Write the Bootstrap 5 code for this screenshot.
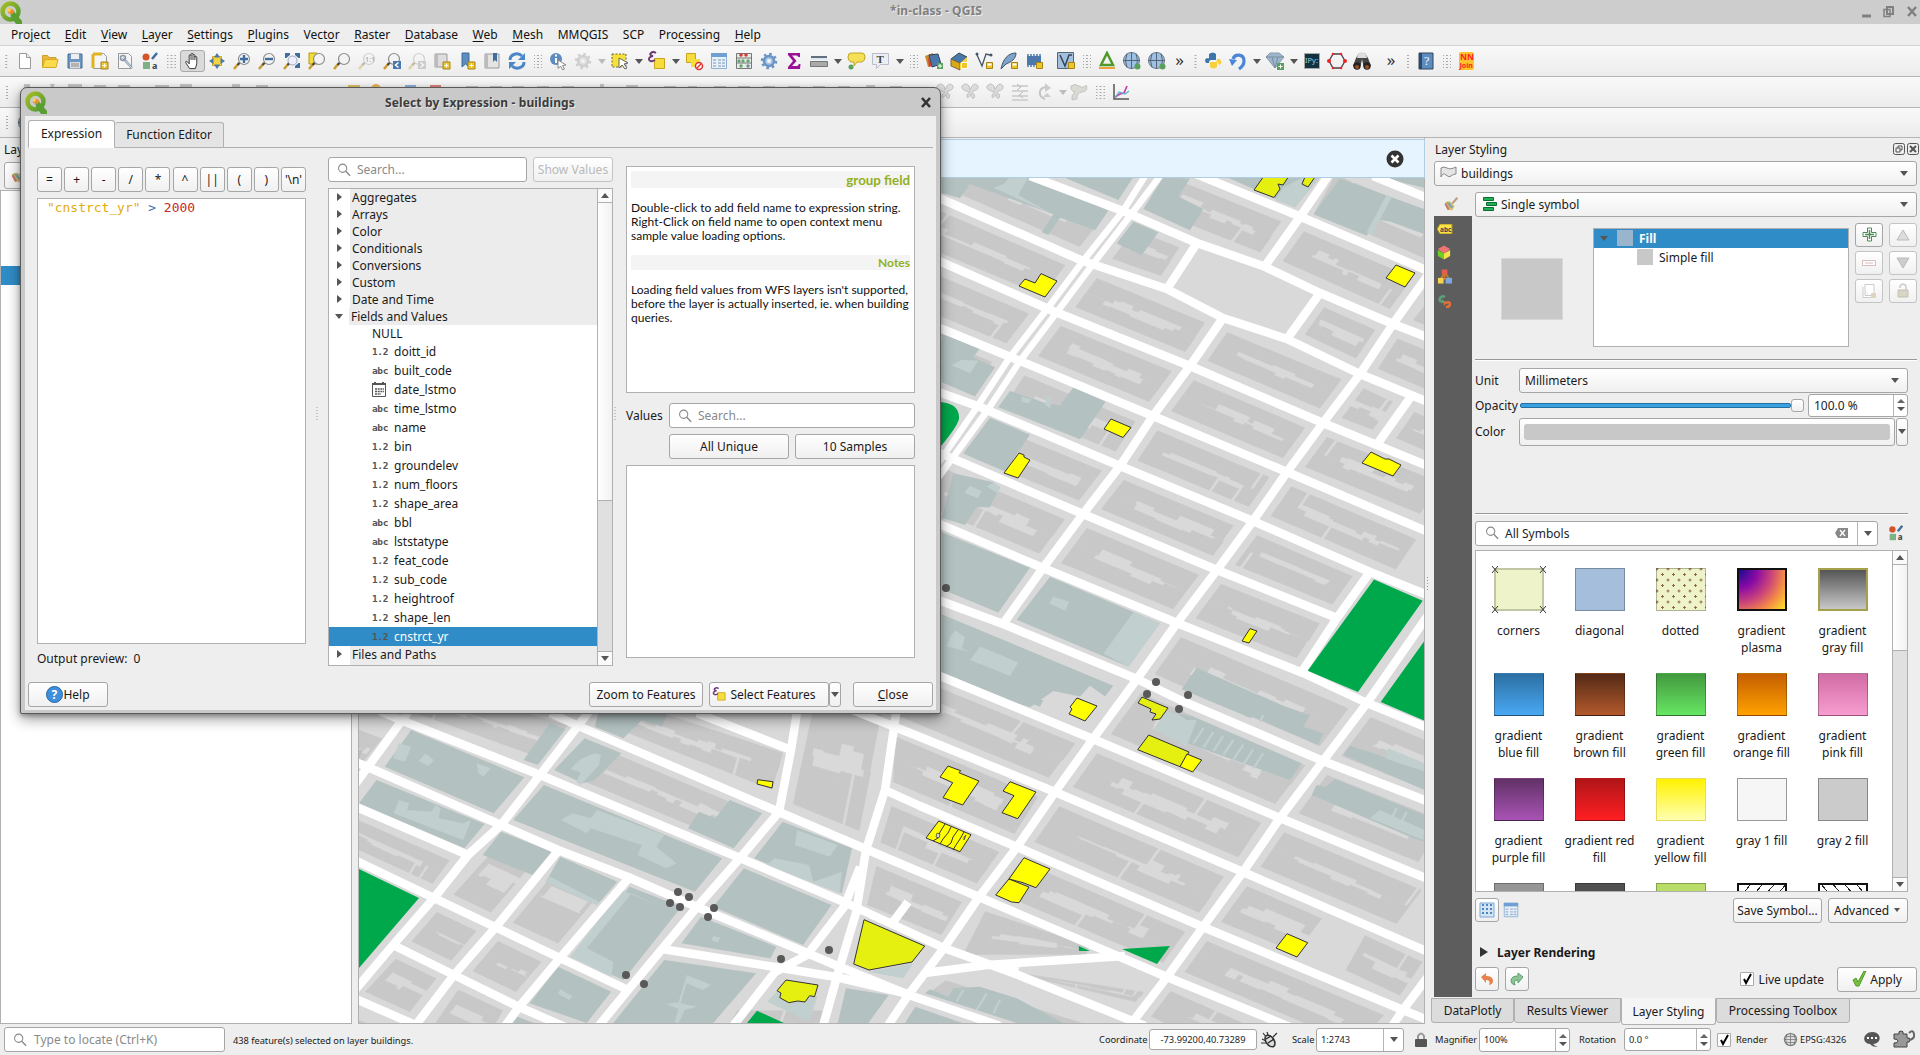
<!DOCTYPE html>
<html lang="en">
<head>
<meta charset="utf-8">
<title>*in-class - QGIS</title>
<link href="https://cdn.jsdelivr.net/npm/bootstrap@5.3.0/dist/css/bootstrap.min.css" rel="stylesheet">
<style>
body{width:1920px;height:1055px;overflow:hidden;background:#eee;font:12px/17px "Noto Sans",sans-serif;color:#1a1a1a;position:relative}
svg{display:block;flex:none}
.titlebar{height:24px;background:#cdcdcd;color:#808080;font-weight:700;text-shadow:1px 1px 0 #eee;letter-spacing:.1px}
.titlebar .ttl{flex:1;text-align:center;padding-right:12px;margin-top:-3px}
.menu{height:22px;gap:14.600px;padding-left:11px;border-bottom:1px solid #d2d2d2;color:#111}
.menu u{text-underline-offset:2px}
.tbar{height:31px;background:linear-gradient(#f9f9f9,#ececec);border-bottom:1px solid #b5b5b5}
.ic{width:20px;height:20px;margin:0 2.5px}
.on{margin:0;background:#dadada;border:1px solid #aaa;border-radius:3px;width:25px;height:22px;padding:0 2px}
.dd{width:12px;display:flex;justify-content:center}
.dd::before,.ar::before{content:"";border:4px solid transparent;border-top:5px solid #555;border-bottom:0}
.dim{opacity:.35}
.grip{height:17px;background:radial-gradient(circle,#aaa 0 .7px,transparent 1px) center/4px 3px;background-clip:content-box;padding:0 4px}
.split{width:3px;height:17px;background:radial-gradient(circle,#999 0 .7px,transparent 1px) center/3px 3px}
.ov{font-size:17px;line-height:14px;text-align:center;color:#333;padding-bottom:3px}
.main{height:886px}
.left{width:352px}
.well{background:#fff;border:1px solid #b0b0b0}
.mapcol{width:1067px;margin-left:6px;border:1px solid #b0b0b0;border-top:0}
.msgbar{height:39px;background:#e5f4fe;border:1px solid #b1cde2;margin:1px -1px 0;padding-right:20px}
.right{width:489px}
.qb{border:1px solid #a6a6a6;border-radius:3px;background:linear-gradient(#fff,#f0f0f0);padding:0;font:inherit;color:#1a1a1a;display:flex;align-items:center;justify-content:center;white-space:nowrap}
.qb.off{border-color:#c4c4c4;color:#b9b9b9}
.inp{border:1px solid #a6a6a6;border-radius:3px;background:#fff;display:flex;align-items:center;color:#8a8a8a;white-space:nowrap}
.ar{display:flex;align-items:center;justify-content:center}
.combo{justify-content:flex-start;padding:0 8px 0 5px}
.combo .ar{margin-left:auto}
.hl{height:2px;border-top:1px solid #999;background:#fff}
.side{width:38px;background:#5d5d5d}
.side .cur{height:24px;background:#eee;padding:4px 0 0 4px}
.side svg{margin-left:3px}
.sb{width:15px;border-left:1px solid #b0b0b0;background:#e0e0e0;display:flex;flex-direction:column}
.sb i{height:14px;background:#fafafa;display:flex;align-items:center;justify-content:center}
.sb i::before{content:"";border:4px solid transparent}
.sb .up{border-bottom:1px solid #b0b0b0}.sb .up::before{border-bottom:5px solid #555;border-top:0}
.sb .dn{border-top:1px solid #b0b0b0;margin-top:auto}.sb .dn::before{border-top:5px solid #555;border-bottom:0}
.sb b{background:linear-gradient(90deg,#fff,#f2f2f2);border-bottom:1px solid #b0b0b0}
.symgrid{display:grid;grid-template-columns:repeat(5,81px);grid-auto-rows:105px;padding:17px 0 0 2px;height:340px;overflow:hidden;width:416px;text-align:center}
.sw{width:50px;height:43px;margin:0 auto 11px;border:1px solid #0004}
.symgrid div div+span{display:block;padding:0 4px}
.spin{width:14px;border-left:1px solid #b5b5b5;display:flex;flex-direction:column;align-items:center;justify-content:center;gap:4px;height:100%;margin-left:auto}
.spin::before{content:"";border:4px solid transparent;border-bottom:4px solid #666;border-top:0}
.spin::after{content:"";border:4px solid transparent;border-top:4px solid #555;border-bottom:0}
.btab{height:25px;background:#dcdcdc;border:1px solid #b0b0b0;border-top-color:#b0b0b0;text-align:center;line-height:24px;border-radius:0 0 3px 3px}
.btab.cur{background:#f5f5f5;border-top-color:#f5f5f5;height:27px;line-height:26px}
.stat{height:31px;font-size:9.3px}
.chk{width:14px;height:14px;border:1px solid #aaa;background:#fff;border-radius:1px}
/* dialog window */
.dlg{position:absolute;left:20px;top:87px;width:921px;height:627px;border:1px solid #5a5a5a;border-radius:7px 7px 2px 2px;background:#c9c9c9;padding:0 4px 4px;box-shadow:0 5px 14px #0006,0 2px 4px #0004}
.dt{height:28px;color:#3c3c3c;font-weight:700;text-shadow:1px 1px 0 #e5e5e5;letter-spacing:.12px}
.dc{background:#eee;height:594px;padding:4px 3px 0}
.tabs{height:28px;border-bottom:1px solid #b0b0b0}
.tb{border:1px solid #b0b0b0;border-radius:3px 3px 0 0;text-align:center}
.ops .qb{width:25px;height:25px;font-size:12px}
.code{font:12.95px/18px "DejaVu Sans Mono",monospace;padding:0 9px}
.cat{height:17px;display:flex;line-height:17px}
.cat::before{content:"";width:0;height:0;margin:4px 8px 0 8px;border:4px solid transparent;border-left:5px solid #555;border-right:0}
.cat.open::before{margin:6px 6px 0 6px;border:4px solid transparent;border-top:5px solid #555;border-bottom:0}
.cat span{flex:1;background:#ececec;padding-left:2px}
.fld{height:19px;display:flex;align-items:center;padding-left:43px;line-height:18px}
.fld i{width:22px;font:700 9.5px/12px "DejaVu Sans Mono",monospace;color:#555;letter-spacing:-.4px}
.fld.sel{background:#308cc6;color:#fff}
.help{font:12px/14px Lato,sans-serif;color:#111;padding:4px 4px}
.strip{background:#f4f4f4;color:#93b023;text-align:right;font-weight:700}
</style>
</head>
<body>
<svg width="0" height="0" class="position-absolute">
<defs>
<linearGradient id="ring" x1="0" y1="0" x2="1" y2="1"><stop offset="0" stop-color="#a2bd22"/><stop offset="1" stop-color="#4f9a33"/></linearGradient>
<symbol id="q" viewBox="0 0 22 24"><circle cx="10.5" cy="11.5" r="8" fill="none" stroke="url(#ring)" stroke-width="4.5"/><path d="M10 11l4 .5 8 9.5v3h-6l-5-7z" fill="#5a9e32"/><path d="M8 8l6 2-1 4-5-1z" fill="#f08b2c"/><path d="M8 8l3 1-1 3-2-.5z" fill="#fbd54b"/></symbol>
<symbol id="new" viewBox="0 0 20 20"><path d="M4.500 2.500h7l4 4v11h-11z" fill="#fff" stroke="#999"/><path d="M11.500 2.500v4h4" fill="#eee" stroke="#999"/></symbol>
<symbol id="open" viewBox="0 0 20 20"><path d="M2.500 16V4.500h5l1.500 2h7V9" fill="#e8b93c" stroke="#c9a02c"/><path d="M2.500 16.500L5 8.500h13l-2 8z" fill="#fbdb4c" stroke="#d7a922"/></symbol>
<symbol id="save" viewBox="0 0 20 20"><path d="M3 3h14v14H3z" fill="#6d97c4" stroke="#486d94"/><path d="M6 3h8v5H6z" fill="#eee"/><path d="M5 11h10v6H5z" fill="#ddd"/><path d="M6 13h8M6 15h8" stroke="#888"/></symbol>
<symbol id="layout" viewBox="0 0 20 20"><path d="M3.500 2.500h10l3 3v12h-13z" fill="#f5f5f5" stroke="#999"/><path d="M3 3v14M3 3h9" stroke="#e0b320" stroke-width="3"/><path d="M11 11h7v7h-7z" fill="#edc52c" stroke="#a68312"/><path d="M14.500 12.500v4M12.500 14.500h4" stroke="#fff"/></symbol>
<symbol id="mgr" viewBox="0 0 20 20"><path d="M3.500 2.500h10l3 3v12h-13z" fill="#f5f5f5" stroke="#999"/><path d="M8 7l9 10" stroke="#89a" stroke-width="2.500"/><path d="M8 7l9 10" stroke="#dde" stroke-width="1"/><circle cx="8" cy="7" r="2.500" fill="none" stroke="#89a" stroke-width="1.500"/></symbol>
<symbol id="style" viewBox="0 0 20 20"><circle cx="6" cy="6" r="3.500" fill="#d4552b"/><path d="M12 8l5-6" stroke="#3f6d9e" stroke-width="2.500"/><path d="M3 11h7v7H3z" fill="#7fb186"/><text x="12" y="18" font-size="9" font-weight="700" fill="#444">a</text></symbol>
<symbol id="hand" viewBox="0 0 20 20"><path d="M7 18l-4-6c-.8-1.800.8-2.400 2-.9L6.500 13V4.500c0-1.500 2-1.500 2 0V3c0-1.500 2-1.500 2 0v1c0-1.500 2-1.300 2 .3V6c.2-1.300 2-1.200 2 .3V13l-1.500 5z" fill="#fff" stroke="#333"/><path d="M8.500 4.500V9M10.500 4v5M12.500 5v4" stroke="#333"/></symbol>
<symbol id="pansel" viewBox="0 0 20 20"><path d="M5.500 5.500h9v9h-9z" fill="#f4d43c" stroke="#c9a71c"/><path d="M10 2l3 4.500H7zM10 18l3-4.500H7zM2 10l4.500-3v6zM18 10l-4.500-3v6z" fill="#4a78ac"/></symbol>
<symbol id="mag" viewBox="0 0 20 20"><path d="M2 18l5-6" stroke="#c99b2e" stroke-width="2.500"/><path d="M5.500 14l2.500-2.500" stroke="#444" stroke-width="2"/><circle cx="12" cy="8" r="5.500" fill="#f3f3f3" stroke="#8d8d8d" stroke-width="1.200"/></symbol>
<symbol id="zin" viewBox="0 0 20 20"><use href="#mag"/><path d="M12 4v8M8 8h8" stroke="#3f6d9e" stroke-width="2.400"/></symbol>
<symbol id="zout" viewBox="0 0 20 20"><use href="#mag"/><path d="M8 8h8" stroke="#3f6d9e" stroke-width="2.400"/></symbol>
<symbol id="zfull" viewBox="0 0 20 20"><path d="M2 18l5-6" stroke="#c99b2e" stroke-width="2.500"/><path d="M5.500 14l2.500-2.500" stroke="#444" stroke-width="2"/><circle cx="10.500" cy="9.500" r="4.500" fill="#eef" stroke="#9ab"/><path d="M3 2h5v2L6 5.500 4.500 7H3zM18 2v5h-1.500L13 4V2zM18 17h-5v-2l3.500-3H18z" fill="#3f6d9e"/></symbol>
<symbol id="zsel" viewBox="0 0 20 20"><path d="M2 2h8v11H2z" fill="#f4dc3c" stroke="#b39a10"/><use href="#mag"/></symbol>
<symbol id="z11" viewBox="0 0 20 20"><use href="#mag"/><text x="8" y="11" font-size="7" font-weight="700" fill="#555">1:1</text></symbol>
<symbol id="zlast" viewBox="0 0 20 20"><use href="#mag"/><path d="M11 10h8v8h-8z" fill="#4a78ac"/><path d="M16.500 11.500l-3 2.500 3 2.500" stroke="#fff" stroke-width="1.500" fill="none"/></symbol>
<symbol id="znext" viewBox="0 0 20 20"><use href="#mag"/><path d="M11 10h8v8h-8z" fill="#888"/><path d="M13.500 11.500l3 2.500-3 2.500" stroke="#fff" stroke-width="1.500" fill="none"/></symbol>
<symbol id="book" viewBox="0 0 20 20"><path d="M3 3h12v13H3z" fill="#ddd" stroke="#999"/><path d="M3 3h3v13H3z" fill="#bbb"/><path d="M11 11h7v7h-7z" fill="#edc52c" stroke="#a68312"/><path d="M14.500 12.500v4M12.500 14.500h4" stroke="#fff"/></symbol>
<symbol id="bm" viewBox="0 0 20 20"><path d="M5 2h7v14l-3.500-3L5 16z" fill="#5d8cc0" stroke="#3f6d9e"/><path d="M11 11h7v7h-7z" fill="#edc52c" stroke="#a68312"/><path d="M14.500 12.500v4M12.500 14.500h4" stroke="#fff"/></symbol>
<symbol id="bmv" viewBox="0 0 20 20"><path d="M3 3h14v14H3z" fill="#e4e4e4" stroke="#999"/><path d="M3 3h3v14H3z" fill="#bbb"/><path d="M11 2h4v9l-2-2-2 2z" fill="#3f6d9e"/></symbol>
<symbol id="ref" viewBox="0 0 20 20"><path d="M3 9c0-6 8-8 12-4" fill="none" stroke="#4a86c8" stroke-width="3"/><path d="M18 2v7h-7zM2 18v-7h7z" fill="#4a86c8"/><path d="M17 11c0 6-8 8-12 4" fill="none" stroke="#4a86c8" stroke-width="3"/></symbol>
<symbol id="ident" viewBox="0 0 20 20"><circle cx="8" cy="8" r="6" fill="#5d8cc0"/><path d="M8 7v5M8 3.500v2" stroke="#fff" stroke-width="2"/><path d="M10 9l8 5-3.500.5 2 3.500-1.800.8-2-3.500-2.700 2z" fill="#fff" stroke="#888"/></symbol>
<symbol id="gear" viewBox="0 0 20 20"><circle cx="10" cy="10" r="5" fill="#a8c4e4" stroke="#6a94c4" stroke-width="2.500"/><circle cx="10" cy="10" r="7" fill="none" stroke="#6a94c4" stroke-width="2.500" stroke-dasharray="2.500 3"/><circle cx="10" cy="10" r="2" fill="#f4f4f4"/></symbol>
<symbol id="sel" viewBox="0 0 20 20"><path d="M2 3h14v13H2z" fill="#f6e13c" stroke="#665" stroke-dasharray="2 1.500"/><path d="M9 7l9 5-4 1 3 4-2 1-3-4-3 3z" fill="#fff" stroke="#666"/></symbol>
<symbol id="eps" viewBox="0 0 20 20"><path d="M7.500 7.500h10v10h-10z" fill="#f6dc3c" stroke="#c7a41c"/><path d="M9 2C5-.5 0 4 6 5-1 6 2 13 8 9" fill="none" stroke="#6b3a76" stroke-width="1.900"/></symbol>
<symbol id="desel" viewBox="0 0 20 20"><path d="M2.500 2.500h9v9h-9z" fill="#f6dc3c" stroke="#c7a41c"/><path d="M7 8h9v8H7z" fill="#f6dc3c"/><circle cx="15" cy="15" r="3.500" fill="#fff" stroke="#d33" stroke-width="1.500"/><path d="M13 17l4-4" stroke="#d33" stroke-width="1.500"/></symbol>
<symbol id="tbl" viewBox="0 0 20 20"><path d="M2.500 2.500h15v15h-15z" fill="#e8f0f8" stroke="#8fb0d0"/><path d="M2 2h16v4H2z" fill="#6fa0d4"/><path d="M4 9h3M9 9h3M13 9h3M4 12h3M9 12h3M13 12h3M4 15h3M9 15h3M13 15h3" stroke="#9ab4d0" stroke-width="1.500"/></symbol>
<symbol id="aba" viewBox="0 0 20 20"><path d="M2.500 2.500h15v15h-15zM2 7h16M2 12h16" fill="#e5efe8" stroke="#777"/><circle cx="7" cy="4" r="1.800" fill="#d43c3c"/><circle cx="12" cy="4" r="1.800" fill="#d43c3c"/><circle cx="5" cy="10" r="1.700" fill="#6aa277"/><circle cx="9" cy="10" r="1.700" fill="#6aa277"/><circle cx="14" cy="10" r="1.700" fill="#6aa277"/><circle cx="7" cy="15" r="1.700" fill="#6aa277"/><circle cx="14" cy="15" r="1.700" fill="#789"/></symbol>
<symbol id="sum" viewBox="0 0 20 20"><path d="M4 2h12v4h-1.500L13 4.500H8l4.500 5.500L8 15h5.500l1.500-2h1.500l-.5 5H4v-2l5-6-5-6z" fill="#9a1295"/></symbol>
<symbol id="ruler" viewBox="0 0 20 20"><path d="M2 6h16" stroke="#345" stroke-width="1.500"/><path d="M1.500 10.500h17v5h-17z" fill="#aaa" stroke="#777"/><path d="M2 7h16v2H2z" fill="#ddeaf5"/></symbol>
<symbol id="tip" viewBox="0 0 20 20"><path d="M5 2h11q3 0 3 4t-3 5h-5l-3 4v-4H5q-3-1-3-5t3-4z" fill="#f5e055" stroke="#bfa52a"/><circle cx="5" cy="16" r="2.500" fill="#58a05b"/></symbol>
<symbol id="txt" viewBox="0 0 20 20"><path d="M1.500 2.500h16v11h-8l-4 4v-4h-4z" fill="#e9eff4" stroke="#bbc"/><text x="5.500" y="12" font-size="11" font-family="Liberation Serif" font-weight="700" fill="#444">T</text></symbol>
<symbol id="lay" viewBox="0 0 20 20"><path d="M1 5l8-3 3 10-8 4z" fill="#c98a2b"/><path d="M5 4l9-1 3 10-9 3z" fill="#4a78ac" stroke="#345"/><path d="M4 6l4 9-3 1z" fill="#d33"/><path d="M13 12h6v6h-6z" fill="#58a05b"/><path d="M16 13v4M14 15h4" stroke="#fff"/></symbol>
<symbol id="box" viewBox="0 0 20 20"><path d="M2 8l8-6 8 4-7 6z" fill="#4a78ac" stroke="#345"/><path d="M2 8l9 4v7l-9-4z" fill="#d9a918" stroke="#765"/><path d="M11 12l7-6v7l-7 6z" fill="#f3d252"/><path d="M12.500 11.500h6v6h-6z" fill="#edc52c" stroke="#fff"/></symbol>
<symbol id="vec" viewBox="0 0 20 20"><path d="M3 4l5 11 4-12 4 1" fill="none" stroke="#456" stroke-width="1.300"/><circle cx="3" cy="3" r="1.500" fill="#456"/><circle cx="17" cy="4" r="1.500" fill="#456"/><path d="M12.500 11.500h6v6h-6z" fill="#edc52c" stroke="#a68312"/><path d="M13.500 12.500h4v2h-4z" fill="#fff"/></symbol>
<symbol id="fea" viewBox="0 0 20 20"><path d="M2 18C4 8 9 2 17 2c0 6-5 9-10 11z" fill="#7ea4ce" stroke="#456"/><path d="M12.500 11.500h6v6h-6z" fill="#edc52c" stroke="#a68312"/><path d="M13.500 12.500h4v2h-4z" fill="#fff"/></symbol>
<symbol id="chip" viewBox="0 0 20 20"><path d="M3 5h14v9H3z" fill="#4a78ac"/><path d="M4 3v13M7 3v13M10 3v13M13 3v13M16 3v13" stroke="#4a78ac" stroke-width="1.500"/><path d="M12.500 11.500h6v6h-6z" fill="#edc52c" stroke="#a68312"/></symbol>
<symbol id="vgrid" viewBox="0 0 20 20"><path d="M1.500 1.500h16v16h-16z" fill="#a3c0de" stroke="#567"/><path d="M4 4l5 11 4-11h3" fill="none" stroke="#345" stroke-width="1.500"/><path d="M12.500 11.500h6v6h-6z" fill="#edc52c" stroke="#a68312"/></symbol>
<symbol id="tri" viewBox="0 0 20 20"><path d="M10 2l6 12H4z" fill="none" stroke="#4f9a2a" stroke-width="2.500"/><path d="M2 16h16v2H2z" fill="#e8a33c"/></symbol>
<symbol id="globe" viewBox="0 0 20 20"><circle cx="9.500" cy="9.500" r="8" fill="#9dc0e4" stroke="#678"/><path d="M9.500 1v17M1 9.500h17M5 2.500q-3 7 0 14M14 2.500q3 7 0 14" fill="none" stroke="#567"/><circle cx="15.500" cy="15.500" r="3" fill="#58a05b"/></symbol>
<symbol id="py" viewBox="0 0 20 20"><path d="M6 9V3q4-3 7 0v6H8q-2 0-2 3H3q-3-5 3-5z" fill="#3c76aa"/><path d="M14 10v6q-4 3-7 0v-5h5q2 0 2-3h3q3 5-1 6z" fill="#f7d13d"/></symbol>
<symbol id="undo" viewBox="0 0 20 20"><path d="M5 8c2-6 11-5 11 2 0 4-2 6-5 8" fill="none" stroke="#4a86d8" stroke-width="3.200"/><path d="M1 8l8 1-5 6z" fill="#4a86d8"/></symbol>
<symbol id="dia" viewBox="0 0 20 20"><path d="M1 6l4-4h9l5 4-9 11z" fill="#9db6cc" stroke="#8a9cb0"/><path d="M1 6h18M7 6l3 11 3-11" stroke="#7a8ca0" fill="none"/><path d="M12 12h7v7h-7z" fill="#58a05b"/><path d="M15.500 13.500v4M13.500 15.500h4" stroke="#fff"/></symbol>
<symbol id="ipy" viewBox="0 0 20 20"><path d="M2.500 2.500h15v15h-15z" fill="#123240" stroke="#aaa"/><text x="3" y="12" font-size="7.500" fill="#9cd">IPy:</text></symbol>
<symbol id="hex" viewBox="0 0 20 20"><path d="M6 3h8l4 7-4 7H6l-4-7z" fill="none" stroke="#445" stroke-width="1.300"/><g fill="#e22"><circle cx="6" cy="3" r="1.300"/><circle cx="14" cy="3" r="1.300"/><circle cx="18" cy="10" r="2"/><circle cx="14" cy="17" r="1.300"/><circle cx="6" cy="17" r="1.300"/><circle cx="2" cy="10" r="2"/></g></symbol>
<symbol id="bino" viewBox="0 0 20 20"><path d="M4 7l3-5h6l3 5 3 8H1z" fill="#444"/><path d="M6 3q4-4 8 0l1 4H5z" fill="#ddd"/><path d="M10 8l2 10H8z" fill="#eee"/><circle cx="5" cy="15" r="3.700" fill="#222"/><circle cx="15" cy="15" r="3.700" fill="#222"/><circle cx="5" cy="16" r="2" fill="#9a5222"/><circle cx="15" cy="16" r="2" fill="#9a5222"/></symbol>
<symbol id="hbook" viewBox="0 0 20 20"><path d="M3 2h14v16H3z" fill="#5d8cc0" stroke="#345"/><path d="M3 2h3v16H3z" fill="#2c4a6c"/><text x="8" y="14" font-size="12" fill="#fff" font-family="Liberation Serif">?</text></symbol>
<symbol id="nn" viewBox="0 0 20 20"><rect x="2" y="1" width="15" height="18" rx="2" fill="#ffc22b"/><text x="3" y="9" font-size="8.500" font-weight="700" fill="#f22">NN</text><text x="2.500" y="16.500" font-size="7" font-weight="700" fill="#f22">Join</text></symbol>
<symbol id="sci" viewBox="0 0 20 20"><path d="M2 4q4-4 7 0l1 4 2-4q3-4 6 0 1 4-5 5l-1 2q4 1 2 5-3 1-3-4-3 5-4 3-1-3 3-5Q0 8 2 4z" fill="#d3d3d3" stroke="#aaa"/></symbol>
<symbol id="plot" viewBox="0 0 20 20"><path d="M3 2v15h15" fill="none" stroke="#555" stroke-width="1.500"/><path d="M4 15l5-3 4-1 3-7" fill="none" stroke="#c23fae" stroke-width="1.700"/><path d="M4 16l4-6 6 2 4-3" fill="none" stroke="#58b5c8" stroke-width="1.300"/></symbol>
<symbol id="loupe" viewBox="0 0 16 16"><circle cx="6.500" cy="6" r="4.700" fill="none" stroke="#888" stroke-width="1.200"/><path d="M10 9.500l5 5" stroke="#888" stroke-width="1.600"/></symbol>
<symbol id="brush" viewBox="0 0 20 20"><path d="M18 2l-6 7" stroke="#b7a07a" stroke-width="2.500"/><path d="M3 8l6-2 6 6-3 5-6-1z" fill="#d9c46c"/><path d="M4 9l4 7" stroke="#c87a74" stroke-width="2.500"/><path d="M8 8l4 6" stroke="#7a9fc4" stroke-width="2.500"/><path d="M6 7l4 6" stroke="#7ab07c" stroke-width="1.500"/></symbol>
</defs>
</svg>

<div class="d-flex flex-column">
<div class="titlebar d-flex align-items-center"><svg width="22" height="24"><use href="#q"/></svg><span class="ttl">*in-class - QGIS</span>
<svg width="58" height="14" viewBox="0 0 58 14" fill="none" stroke="#808080"><path d="M0 11h9" stroke-width="3"/><path d="M22 4.500h6v7h-6z" stroke-width="1.500"/><path d="M25 2h6v7h-6z" stroke-width="2"/><path d="M46 2l8 9M54 2l-8 9" stroke-width="2.500"/></svg></div>
<nav class="menu d-flex align-items-center"><span>Pro<u>j</u>ect</span><span><u>E</u>dit</span><span><u>V</u>iew</span><span><u>L</u>ayer</span><span><u>S</u>ettings</span><span><u>P</u>lugins</span><span>Vect<u>o</u>r</span><span><u>R</u>aster</span><span><u>D</u>atabase</span><span><u>W</u>eb</span><span><u>M</u>esh</span><span>MMQGIS</span><span>SCP</span><span>Pro<u>c</u>essing</span><span><u>H</u>elp</span></nav>
<div class="tbar d-flex align-items-center">
<span class="grip" style="width:12.5px"></span><svg class="ic"><use href="#new"/></svg><svg class="ic"><use href="#open"/></svg><svg class="ic"><use href="#save"/></svg><svg class="ic"><use href="#layout"/></svg><svg class="ic"><use href="#mgr"/></svg><svg class="ic"><use href="#style"/></svg><span class="grip" style="width:17px"></span><svg class="ic on"><use href="#hand"/></svg><svg class="ic"><use href="#pansel"/></svg><svg class="ic"><use href="#zin"/></svg><svg class="ic"><use href="#zout"/></svg><svg class="ic"><use href="#zfull"/></svg><svg class="ic"><use href="#zsel"/></svg><svg class="ic"><use href="#mag"/></svg><svg class="ic dim"><use href="#z11"/></svg><svg class="ic"><use href="#zlast"/></svg><svg class="ic dim"><use href="#znext"/></svg><svg class="ic"><use href="#book"/></svg><svg class="ic"><use href="#bm"/></svg><svg class="ic"><use href="#bmv"/></svg><svg class="ic"><use href="#ref"/></svg><span class="grip" style="width:16px"></span><svg class="ic"><use href="#ident"/></svg><svg class="ic dim" style="filter:grayscale(1)"><use href="#gear"/></svg><span class="dd dim"></span><svg class="ic"><use href="#sel"/></svg><span class="dd"></span><svg class="ic"><use href="#eps"/></svg><span class="dd"></span><svg class="ic"><use href="#desel"/></svg><svg class="ic"><use href="#tbl"/></svg><svg class="ic"><use href="#aba"/></svg><svg class="ic"><use href="#gear"/></svg><svg class="ic"><use href="#sum"/></svg><svg class="ic"><use href="#ruler"/></svg><span class="dd"></span><svg class="ic"><use href="#tip"/></svg><svg class="ic"><use href="#txt"/></svg><span class="dd"></span><span class="grip" style="width:16px"></span><svg class="ic"><use href="#lay"/></svg><svg class="ic"><use href="#box"/></svg><svg class="ic"><use href="#vec"/></svg><svg class="ic"><use href="#fea"/></svg><svg class="ic"><use href="#chip"/></svg><span style="width:7px"></span><svg class="ic"><use href="#vgrid"/></svg><span class="grip" style="width:16px"></span><svg class="ic"><use href="#tri"/></svg><svg class="ic"><use href="#globe"/></svg><svg class="ic"><use href="#globe"/></svg><span class="ov" style="width:20px">»</span><span class="grip" style="width:11px"></span><svg class="ic"><use href="#py"/></svg><svg class="ic"><use href="#undo"/></svg><span class="dd"></span><svg class="ic"><use href="#dia"/></svg><span class="dd"></span><svg class="ic"><use href="#ipy"/></svg><svg class="ic"><use href="#hex"/></svg><svg class="ic"><use href="#bino"/></svg><span class="ov" style="width:27px;padding-left:6px">»</span><span class="grip" style="width:12px"></span><svg class="ic"><use href="#hbook"/></svg><span class="grip" style="width:16px"></span><svg class="ic"><use href="#nn"/></svg>
</div>
<div class="tbar d-flex align-items-center"><span class="grip" style="width:14px"></span>
<svg width="918" height="20" viewBox="14 0 918 20" fill="#b9b9b9" opacity=".8"><path d="M24 2l6 0 1 16h-8zM50 2l5 0-3 6zM68 2h14v15H68zM94 3h12v9H94zM118 3h12v9h-12zM155 3h14v9h-14zM180 2h12v9h-12zM232 2h8v12h-8zM256 3h12v9h-12z"/><path d="M348 3h12v8h-12z" fill="#d8b53c"/><circle cx="376" cy="7" r="5" fill="#e8a52c"/><path d="M405 3h11v8h-11z" fill="#6f9fd8"/><path d="M430 3h11v8h-11z" fill="#e0605a"/><path d="M466 4h12v7h-12zM490 4h12v7h-12zM512 4h12v7h-12zM537 4h12v7h-12zM562 4h12v7h-12zM600 2h4v9h-4zM626 3h12v9h-12zM664 4h12v9h-12zM688 4h9v9h-9zM714 4h12v9h-12zM738 4h12v9h-12zM763 4h12v9h-12zM788 4h12v9h-12zM813 4h12v9h-12zM838 4h12v9h-12zM866 3h9v9h-9zM890 4h12v9h-12z"/></svg>
<svg class="ic dim" style="opacity:.7"><use href="#sci"/></svg><svg class="ic" style="opacity:.7"><use href="#sci"/></svg><svg class="ic" style="opacity:.7"><use href="#sci"/></svg><svg class="ic" viewBox="0 0 20 20"><path d="M2 4h16M2 9h16M2 14h16M2 18h16" stroke="#d3d3d3" stroke-width="2"/><path d="M7 2l4 3-4 3M13 10l-4 3 4 3" stroke="#bbb" fill="none"/></svg><svg class="ic" viewBox="0 0 20 20"><path d="M10 17c-7-2-7-11 1-12" fill="none" stroke="#c4c4c4" stroke-width="2"/><path d="M10 1l6 5-6 4zM8 15h8l-4-4z" fill="#ccc"/></svg><span class="dd dim"></span><svg class="ic" style="margin-left:0" viewBox="0 0 20 20"><path d="M2 4q4-3 8 0t7-1q3 6-4 7-6 1-5 7l-5 1q-1-5 3-8-5-1-4-6z" fill="#d9dbd3" stroke="#c4c4c4"/></svg><span class="grip" style="width:17px"></span><svg class="ic"><use href="#plot"/></svg></div>
<div class="tbar d-flex align-items-center" style="height:30px"><span class="grip" style="width:14px"></span><svg class="ic"><use href="#globe"/></svg></div>

<div class="main d-flex">
<div class="left d-flex flex-column"><div style="height:24px;padding:3px 4px">Layers</div>
<div class="d-flex" style="height:28px;padding:0 4px 2px"><div class="qb on" style="width:28px;height:27px"><svg width="18" height="18"><use href="#brush"/></svg></div></div>
<div class="well flex-fill" style="padding-top:75px"><div style="height:19px;background:#308cc6"></div></div></div>
<div class="mapcol d-flex flex-column"><div class="msgbar d-flex align-items-center justify-content-end"><svg width="18" height="18" viewBox="0 0 18 18"><circle cx="9" cy="9" r="8.500" fill="#333"/><path d="M5.500 5.500l7 7M12.500 5.500l-7 7" stroke="#fff" stroke-width="2.600"/></svg></div>
<svg id="map" width="1065" height="845" viewBox="359 178 1065 845" style="background:#d9d9d9">
<path id="lots" fill="#c8c8c8" stroke="#cbcbcb" stroke-width=".4"/>
<g fill="#b3c2c1">
<g transform="translate(350 700) scale(.40816 .33333)">
<path d="M150 90L427 232 352 340 85 200zM65 240L330 372 280 445 22 310zM475 255L912 475 845 575 400 360zM370 395L495 455 447 525 325 465zM515 470L655 545 605 615 480 545zM685 560L812 620 670 840 540 770zM965 505L1180 615 1110 735 890 620zM1060 365L1230 445 1205 580 990 475zM930 300L1010 340 940 445 828 385 855 335 895 355zM860 650L1045 740 1030 775 812 730zM770 780L995 820 890 969 645 969zM510 800L640 875 580 969 440 910zM1215 865L1320 885 1270 969 1195 969zM575 115L665 160 600 240 570 250 500 210zM490 70L528 88 460 195 425 180zM610 30L780 30 765 80 715 60 670 115 600 80zM1385 920L1500 969 1360 969zM400 945L450 969H395zM22 150l10 0-10 25z"/>
<path fill="#c1cfce" d="M605 330L770 405 750 440 800 490 775 505 705 465 715 435 590 385 580 400 517 360 545 340 590 355zM120 130l30 10-15 45-30-10zM185 160l20 20-12 18-25-15zM310 190l35 15-18 25-12-10zM120 300l25 10-5 20 60 5 10-20 12 10-5 30 60 15 20-10-20 60-170-80zM600 160l15 5-5 30-45 60-10-8 10-30-25-10 25-30zM540 770L665 570 750 615 690 580 580 745 645 785 640 830zM1095 390l100 45-20 35-85-35zM1040 475l85 20 10 50 70-30-5 65-180-85zM1270 815L1380 790 1355 835zM1050 870L1145 890 1125 965 1022 905zM480 545l10-15 120 75-5 10zM890 708l18 6-8 14-15-8zM515 868l30 20-8 12-27-18zM825 825l60 30-20 15-40-20-15 60 40 10-30 10-15 40-10-3 10-40-30-15 30-5z"/>
</g>
<g transform="translate(920 700) scale(.33333)">
<path d="M820 50L1145 190 1110 240 800 130 740 30zM870 0L1040 0 1170 45 1150 80 1210 100 1195 135 900 10zM1245 237L1513 345 1513 425 1480 415 1175 285 1190 255 1215 262zM1290 137L1513 210 1513 270 1270 165zM15 880L30 868 85 890 100 865 180 860 290 895 430 969 290 969zM0 928L100 969H0zM310 0h60l-10 20z"/>
<path fill="#c1cfce" d="M700 90L740 30 770 40 800 60 830 60 800 140zM1405 145l110 45v25l-120-40zM1380 330l133 60-3 30-160-65z"/>
<path fill="none" stroke="#c1cfce" stroke-width="7" d="M850 85l-30 45M880 97l-30 45M910 108l-30 45M940 120l-30 45M970 134l-30 45M1000 148l-30 45M1030 160l-30 45M1000 10l-20 40M1040 25l-20 40M1430 325l-20 40M1460 335l-20 40M130 870l-20 35M200 880l-30 50M240 900l-20 40"/>
</g>
<g transform="translate(930 150) scale(.33333 .35714)">
<path d="M35 76L330 76 535 170 495 225 390 190 355 238 335 230 370 180 120 95 90 135 35 120zM400 76L610 76 565 140zM700 76L780 80 745 130 820 165 780 225 640 165zM610 200L685 230 635 295 560 262zM890 76L1170 76 1095 160zM1230 80L1482 165 1482 235 1380 200 1340 195 1310 240 1150 180zM35 515L150 555 130 580 195 608 135 690 35 650zM240 675L350 710 390 715 430 665 527 705 450 810 205 720zM180 750L300 797 225 900 100 850zM70 905L190 930 210 945 180 1000 140 1000 105 1050 35 1030zM35 1070L300 1170 205 1295 35 1230zM360 1195L690 1325 595 1447 260 1315zM35 1300L550 1500 525 1530 480 1500 450 1530 370 1515 300 1560 200 1530 35 1465zM800 1450L1080 1565 960 1590 755 1510zM1350 76h132v30z"/>
<path fill="#c1cfce" d="M610 1295L690 1325 595 1447 520 1410zM150 1390l115 45-25 38-120-45zM370 1250l48 15-12 25-48-20zM75 1345l30 20-10 30 25 10-70-15 10-25zM120 940l35 15-12 20-40-15zM95 587l50 3-25 35-55-22zM240 76h55l-30 50 105 55-180-75 30-10zM1060 105l60-29 50 0-75 84-60-20zM1370 125l15 8-60 105-15-8zM275 690l30 8-10 12-20-5zM350 690l15 3-5 30-15-10zM190 932l20 10-5 20-35-20z"/>
</g>
</g>
<g fill="none" stroke="#fff" stroke-width="8.500" stroke-linejoin="round">
<path d="M1373 176L1440 203M1196 174L1300 216.500 1440 276M1030 176L1123 211 1197 243 1263 266 1320 293 1393 324 1440 342M930 194L1083 261 1167 289 1223 318 1287 339 1360 374 1440 407M930 257L1053 311 1190 366 1323 423 1440 471M930 324L1013 358 1153 416 1287 472 1440 537M930 389L980 407 1120 466 1253 521 1370 572 1440 600M930 449L1083 514 1217 570 1337 618M930 520L1043 568 1177 623 1303 673 1367 703 1440 733M930 597L1003 624 1137 679 1180 700 1323 761 1440 806M930 672L1093 739 1280 818 1440 884M850 709L920 737 1055 792 1243 872 1440 957M697 713L791 750M884.700 790L920 806 1017 847 1203 927 1403 1010 1440 1025M550 713L583 728 779 812 868 850 979 897 1167 977 1290 1027M380 711L403 721 540 775 740 858 844 902 944 948 1013 973 1145 1026M340 755L501 825 558 850 628 877 697 907 807 953 840 967 909 995 1000 1026M340 800L468 855M340 853L434 898 495 927 560 958 628 990M393 945L454 975 519 1007 565 1027M340 992L420 1027"/>
<path d="M411 708L340 805M598 700L540 775 501 825 468 855 434 898 393 945 345 1002M558 851L495 928 454 975 412 1030M628 879L560 958 519 1007 500 1033M799 700L791 750 779 812 740 858 697 907 628 990 597 1028M898 700L885 790 866 850 856 913 838 973 822 1030M860 867L844 907 807 955 775 972 730 1030M662 949L775 967 836 977 909 994M1433 268L1393 324 1360 374 1323 423 1287 472 1253 521 1217 570 1177 623 1137 679 1093 739 1055 792 1017 847 979 897 944 948 909 994 885 1030M1440 598L1367 703 1323 761 1280 818 1243 872 1203 927 1167 977 1128 1028M1435 967L1403 1010 1388 1032M925 973L987 965 1125 956M1012 973L1017 963M893 922L908 902M1328 176L1300 217 1265 266M1197 243L1167 289M1223 318L1190 366 1153 416 1120 466 1083 514 1043 568 1003 624M1320 293L1287 339M1410 398L1378 443M1370 572L1337 618 1301 673"/>
<path stroke-width="6.500" d="M1145 176L1123 211 1083 261 1047 309 1010 357 977 407 935 468M1160 176L1130 216 1093 264 1057 312 1020 361 987 411 935 482"/>
</g>
<path fill="#00a84c" d="M1374 579.600L1422.700 600.700 1358 692 1307.700 670.700zM1425 640L1380.700 702 1425 721zM930 400L941 402Q960 404 959 419 957 427 941 446L930 450zM359 869L419 898 359 968zM757 1010.700L784 1023H747zM1078.700 946L1090 951H1079zM1122 949L1170 946 1157 964z"/>
<g stroke="#333" stroke-width="1">
<path fill="#e5f011" d="M1254 190L1264 176H1289L1283 185 1278 184 1280 189 1274 197.500zM1305 177H1315L1308 187 1302 184zM1142 697L1168 708 1160 719 1152 720 1156 714 1150 712 1151 709 1138 703zM1148.700 735L1189 752 1180 766.700 1137.700 749.700zM864 919.700L924.700 946 912 962 869 970 853.700 964zM786 980L818 985 814.500 996.700 809.600 995.700 805 1002 797.800 1001 788.800 1002.700 779.800 997.700 781 993 777 990.700z"/>
<path fill="#ff0" d="M1396 265L1415 273 1405 287 1386 278zM1019 286L1025 279 1035 283 1041 273.600 1057 281 1045 297zM1111 419L1131 427.500 1123 437.500 1104 429zM1019 453L1024 455 1024 457 1030 460 1018 478 1004 473zM1371 452L1385 459 1389 459 1401 465 1393 476 1362 463zM1250 628.600L1257 631 1249 643 1242 641zM1077 698L1097 706 1085 721 1069 714 1072 709 1070 707zM1187 754L1201.700 760 1192.700 772 1180 766.700zM948 766L960.700 770.700 959 772.700 979 781 962.700 805 943 797.700 952.700 782.700 940 777zM1010 781.700L1036 792 1017.700 818.700 1002 812.700 1014 795.700 1003 791zM938.700 821L971 834.700 960 851.700 926 838zM1024 857.700L1050 869 1036 887.700 1023 882.700 1009 879zM1009 879L1029 887 1019 902.700 1011.700 902 995.700 895zM1287 933.700L1307.700 942.700 1297 957 1276 948zM757.800 779.700L773 781.700 772 788 757 784z"/>
<path fill="none" d="M945 824L940 832 938 838 933 841M951 827L948 833 943 839 940 844M958 830L953 837 951 843 946 847M964 832L960 839 956 845 953 850"/><path fill="#d9d9d9" stroke-width=".7" d="M937 833l3 1-1 4-3-1zM964 837l2-2-2 5z"/>
</g>
<g fill="#595959" id="dots"></g>
</svg></div>

<span class="split" style="margin:437px 2px 0 1px"></span>
<div class="right d-flex flex-column">
<div class="d-flex align-items-center" style="height:23px;padding-left:4px"><span>Layer Styling</span><svg class="ms-auto" width="30" height="13" viewBox="0 0 30 13" fill="none" stroke="#555"><rect x="3.500" y=".5" width="11" height="11" rx="2"/><path d="M6 5h4v4H6zM8 5V3h4v4h-2"/><rect x="17.500" y=".5" width="11" height="11" rx="2"/><path d="M20 3l6 6M26 3l-6 6" stroke-width="2"/></svg></div>
<button class="btn qb combo" style="width:483px;height:25px;margin-left:3px"><svg width="17" height="14" viewBox="0 0 17 14" class="me-1"><path d="M1 2q3-2 6 0t9-1v7q-3 0-5 2t-5-1-5 2z" fill="#e5e5e5" stroke="#888"/></svg>buildings<span class="ar"></span></button>
<div class="d-flex" style="height:806px;margin:6px 3px 0">
<div class="side"><div class="cur"><svg width="19" height="17"><use href="#brush"/></svg></div>
<svg style="margin-top:8px" width="16" height="10" viewBox="0 0 16 10"><path d="M3 0h12v10H3L0 5z" fill="#f7e24a" stroke="#a98d16"/><text x="3" y="8" font-size="6.500" font-weight="700" fill="#444">abc</text></svg>
<svg style="margin-top:11px" width="14" height="15" viewBox="0 0 16 16"><path d="M8 0l7 4-7 5-7-5z" fill="#f07474"/><path d="M1 5l7 4v7l-7-4z" fill="#6ad021"/><path d="M15 5L8 9v7l7-4z" fill="#f7e24a"/></svg>
<svg style="margin-top:8px" width="16" height="17" viewBox="0 0 17 17"><path d="M8 4L4 11M8 4l5 7M8 4v8" stroke="#c9792b" stroke-width="2"/><path d="M5 1h6v5H5z" fill="#e65c50"/><path d="M1 10h6v6H1z" fill="#f5d34f"/><path d="M9 10h7v6H9z" fill="#7aa7dc"/></svg>
<svg style="margin-top:10px;margin-left:4px" width="14" height="14" viewBox="0 0 14 14"><path d="M7 2C3 0 0 4 3 7" stroke="#5f9f75" stroke-width="2.500" fill="none"/><path d="M4 1l4 4H3z" fill="#5f9f75" transform="translate(0 3)"/><path d="M7 8q5-2 5 1 0 3-4 3" stroke="#e0703a" stroke-width="2.500" fill="none"/><path d="M5 6l4 1-3 4z" fill="#e0703a"/></svg></div>
<div class="d-flex flex-column" style="width:442px;margin-left:3px">
<button class="btn qb combo" style="height:25px;padding-left:7px"><svg width="14" height="15" viewBox="0 0 14 15" class="me-1"><path d="M.5.500h10v3H.5zM3.500 5.500h10v3h-10zM.5 10.500h10v3H.5z" fill="#1fb057" stroke="#0c6b31"/></svg>Single symbol<span class="ar"></span></button>
<div class="d-flex" style="height:142px;padding-top:6px">
<div style="width:62px;height:62px;background:#c8c8c8;border:1px solid #d8d8d8;margin:35px 30px 0 26px"></div>
<div class="well" style="width:256px;height:119px;margin:5px 6px 0 0"><div class="d-flex align-items-center fw-bold text-white" style="height:19px;background:#308cc6;padding-left:6px"><span class="ar"></span><i style="width:16px;height:16px;background:#9ab4cb;margin:0 6px 0 9px"></i>Fill</div><div class="d-flex align-items-center" style="height:19px;padding-left:43px"><i style="width:16px;height:16px;background:#c8c8c8;margin-right:6px"></i>Simple fill</div></div>
<div class="d-grid" style="grid-template-columns:28px 28px;gap:4px 6px;grid-auto-rows:24px">
<button class="btn qb"><svg width="15" height="15" viewBox="0 0 15 15"><path d="M5.500 1h4v4.500H14v4H9.500V14h-4V9.500H1v-4h4.500z" fill="#fff" stroke="#4c8a53"/><path d="M7.500 3v9M3 7.500h9" stroke="#4c8a53" stroke-width="1.500"/></svg></button>
<button class="btn qb off"><svg width="14" height="12" viewBox="0 0 14 12"><path d="M7 1l6 10H1z" fill="#ddd" stroke="#bbb"/></svg></button>
<button class="btn qb off"><svg width="14" height="6" viewBox="0 0 14 6"><path d="M.5.500h13v5H.5zM3 3h8" fill="#fff" stroke="#d9bcbc"/></svg></button>
<button class="btn qb off"><svg width="14" height="12" viewBox="0 0 14 12"><path d="M7 11L1 1h12z" fill="#ccc" stroke="#bbb"/></svg></button>
<button class="btn qb off"><svg width="14" height="14" viewBox="0 0 14 14"><path d="M3 .500h9v11H3zM1 3v10.500h9" fill="#fff" stroke="#ccc"/><path d="M9 9h5v5H9z" fill="#ddd5c0"/></svg></button>
<button class="btn qb off"><svg width="14" height="15" viewBox="0 0 14 15"><path d="M4 5V3q3-4 6 0v4" fill="none" stroke="#ccc" stroke-width="1.500"/><path d="M2 7h10v7H2z" fill="#d9d4c4" stroke="#c4c0b4"/></svg></button></div></div>
<div class="hl"></div>
<div style="width:433px">
<div class="d-flex align-items-center" style="margin-top:7px"><span style="width:44px">Unit</span><button class="btn qb combo" style="width:389px;height:25px">Millimeters<span class="ar"></span></button></div>
<div class="d-flex align-items-center" style="margin-top:1px"><span style="width:45px">Opacity</span><div style="width:271px;height:5px;background:#3aa0e0;border:1px solid #24709f;border-radius:2px"></div><div class="qb" style="width:13px;height:13px"></div><div class="inp text-dark" style="width:100px;height:23px;margin-left:4px;padding-left:5px">100.0 %<span class="spin"></span></div></div>
<div class="d-flex align-items-center" style="margin-top:1px"><span style="width:44px">Color</span><div class="qb" style="width:376px;height:28px;padding:4px"><div class="w-100" style="height:16px;background:#c8c8c8;border-radius:3px"></div></div><div class="qb ar" style="width:12px;height:28px;margin-left:1px"></div></div>
<div class="hl" style="margin:67px 0 6px"></div>
<div class="d-flex align-items-center"><div class="inp text-dark" style="width:403px;height:25px;padding-left:9px"><svg width="14" height="14" style="margin-right:6px"><use href="#loupe"/></svg>All Symbols<svg class="ms-auto" width="13" height="10" viewBox="0 0 13 10"><path d="M3 0h10v10H3L0 5z" fill="#888"/><path d="M5 2l5 6M10 2L5 8" stroke="#fff" stroke-width="1.300"/></svg><span class="ar h-100" style="border-left:1px solid #b5b5b5;width:20px;margin-left:9px"></span></div><svg class="ic" style="width:18px;margin-left:9px"><use href="#style"/></svg></div>
<div class="well d-flex justify-content-between" style="height:342px;margin-top:4px"><div class="symgrid">
<div><div class="sw position-relative" style="background:#eff3c9;border-color:#c3c6a5;border-width:2px"><svg class="position-absolute" style="left:-6px;top:-6px" width="58" height="51" stroke="#333" fill="none"><path d="M2 2l6 7M8 2L2 9M50 2l6 7M56 2l-6 7M2 42l6 7M8 42l-6 7M50 42l6 7M56 42l-6 7"/></svg></div><span>corners</span></div>
<div><div class="sw" style="background:#a5bedb"></div><span>diagonal</span></div>
<div><div class="sw" style="background:radial-gradient(circle,#8b6a44 0 1px,transparent 1.400px) 0 0/11px 11px,radial-gradient(circle,#8b6a44 0 1px,transparent 1.400px) 5.500px 5.500px/11px 11px #eff3c9"></div><span>dotted</span></div>
<div><div class="sw" style="background:radial-gradient(circle at 0 0,#1a0a90,#8a0aa5 30%,#cc4678 55%,#f58c46 76%,#fbe624);border:2px solid #111"></div><span>gradient plasma</span></div>
<div><div class="sw" style="background:linear-gradient(#555,#c8c8c8);border:2px solid #a5a04b"></div><span>gradient gray fill</span></div>
<div><div class="sw" style="background:linear-gradient(#2c70a4,#49a8f2)"></div><span>gradient blue fill</span></div>
<div><div class="sw" style="background:linear-gradient(#542a16,#b35a2c)"></div><span>gradient brown fill</span></div>
<div><div class="sw" style="background:linear-gradient(#43993f,#66e662)"></div><span>gradient green fill</span></div>
<div><div class="sw" style="background:linear-gradient(#c55e00,#ffa200)"></div><span>gradient orange fill</span></div>
<div><div class="sw" style="background:linear-gradient(#d16ca5,#f79dd0)"></div><span>gradient pink fill</span></div>
<div><div class="sw" style="background:linear-gradient(#613266,#a953b5)"></div><span>gradient purple fill</span></div>
<div><div class="sw" style="background:linear-gradient(#b01518,#ff1f22)"></div><span>gradient red<br>fill</span></div>
<div><div class="sw" style="background:linear-gradient(#fff200,#ffffb0);border-color:#e9d95a"></div><span>gradient yellow fill</span></div>
<div><div class="sw" style="background:#f6f6f6;border:1.500px solid #999"></div><span>gray 1 fill</span></div>
<div><div class="sw" style="background:#cbcbcb;border:1.500px solid #888"></div><span>gray 2 fill</span></div>
<div><div class="sw" style="background:#969696"></div></div><div><div class="sw" style="background:#505050"></div></div><div><div class="sw" style="background:#b8dd68"></div></div>
<div><div class="sw" style="background:repeating-linear-gradient(130deg,#fff 0 8px,#222 8px 9px);border:2px solid #111"></div></div><div><div class="sw" style="background:repeating-linear-gradient(50deg,#fff 0 8px,#222 8px 9px);border:2px solid #111"></div></div>
</div><div class="sb"><i class="up"></i><b style="height:86px"></b><i class="dn"></i></div></div>
<div class="d-flex align-items-center" style="margin-top:6px"><div class="qb on" style="width:24px;height:24px"><svg width="16" height="16" viewBox="0 0 16 16"><path d="M1 1h14v14H1z" fill="#d5e4f3" stroke="#7fa8d4"/><path d="M4 2v12M8 2v12M12 2v12" stroke="#4a86c8" stroke-width="2" stroke-dasharray="2 2"/></svg></div><svg width="18" height="18" style="margin-left:3px"><use href="#tbl"/></svg><button class="btn qb ms-auto" style="width:89px;height:25px">Save Symbol...</button><button class="btn qb" style="width:80px;height:25px;margin-left:6px">Advanced<span class="dd ms-1" style="zoom:.8"></span></button></div>
</div>
<div class="d-flex align-items-center fw-bold" style="margin-top:21px;height:17px"><i style="border:5px solid transparent;border-left:8px solid #333;border-right:0;margin:0 9px 0 5px"></i>Layer Rendering</div>
<div class="d-flex align-items-center" style="margin-top:6px"><button class="btn qb" style="width:24px;height:24px"><svg width="14" height="14" viewBox="0 0 14 14"><path d="M1 5l5-4v3q7 0 7 5 0 3-4 4 2-5-3-5v3z" fill="#e8824a"/></svg></button><button class="btn qb" style="width:24px;height:24px;margin-left:6px"><svg width="14" height="14" viewBox="0 0 14 14"><path d="M13 5L8 1v3Q1 4 1 9q0 3 4 4-2-5 3-5v3z" fill="#8fc49a" stroke="#5f9f6c"/></svg></button>
<span class="chk ms-auto"><svg width="12" height="12" viewBox="0 0 12 12"><path d="M3 6l2 4 5-9" fill="none" stroke="#000" stroke-width="2"/></svg></span><span style="margin:0 13px 0 5px">Live update</span><button class="btn qb" style="width:80px;height:25px"><svg width="15" height="16" viewBox="0 0 15 16"><path d="M1 9l3-2 2 4L12 0h2L7 15H4z" fill="#7ac142" stroke="#4f9a2a"/></svg>&nbsp;Apply</button></div>
</div></div>
<div class="d-flex" style="margin-top:1px;border-top:1px solid #b0b0b0;height:26px"><div class="btab" style="width:83px;margin-top:-1px">DataPlotly</div><div class="btab" style="width:107px;margin-top:-1px">Results Viewer</div><div class="btab cur" style="width:95px;margin-top:-1px">Layer Styling</div><div class="btab" style="width:134px;margin-top:-1px">Processing Toolbox</div></div>
</div></div>

<div class="stat d-flex align-items-center">
<div class="inp" style="width:221px;height:25px;margin-left:4px;padding-left:8px;font-size:12px"><svg width="14" height="14" style="margin-right:7px"><use href="#loupe"/></svg>Type to locate (Ctrl+K)</div>
<span style="width:866px;padding:2px 0 0 8px;letter-spacing:-.03px">438 feature(s) selected on layer buildings.</span><span style="width:58px;padding-left:8px">Coordinate</span><div class="inp text-dark justify-content-center" style="width:108px;height:21px">-73.99200,40.73289</div>
<svg width="18" height="18" viewBox="0 0 18 18" style="margin:0 14px 0 3px"><path d="M3 2l4 5M7 1l2 6M2 8l4 2M1 12l5 0M17 2l-4 4" stroke="#333" stroke-width="1.200"/><ellipse cx="10" cy="10" rx="4" ry="6.500" transform="rotate(-35 10 10)" fill="#ddd" stroke="#333" stroke-width="1.600"/><path d="M6 8l5-3M8 12l6-4" stroke="#222" stroke-width="1.300"/></svg>
<span style="width:24px">Scale</span><div class="inp text-dark" style="width:88px;height:24px;padding-left:4px">1:2743<span class="ar h-100 ms-auto" style="width:20px;border-left:1px solid #b5b5b5"></span></div>
<svg width="14" height="16" viewBox="0 0 14 16" style="margin:0 7px 0 10px"><path d="M4 8V4q3-5 6 0v4" fill="none" stroke="#999" stroke-width="2"/><rect x="1" y="7" width="12" height="8" rx="1" fill="#555"/></svg>
<span style="width:44px;white-space:nowrap">Magnifier</span><div class="inp text-dark" style="width:91px;height:24px;padding-left:4px">100%<span class="spin"></span></div><span style="width:54px;padding-left:9px">Rotation</span><div class="inp text-dark" style="width:87px;height:23px;padding-left:4px">0.0 °<span class="spin"></span></div>
<span class="chk" style="margin:0 5px 0 6px"><svg width="12" height="12" viewBox="0 0 12 12"><path d="M3 6l2 4 5-9" fill="none" stroke="#000" stroke-width="2"/></svg></span><span style="width:47px">Render</span><svg width="15" height="15" viewBox="0 0 20 20"><circle cx="10" cy="10" r="8" fill="#ddd" stroke="#777" stroke-width="1.500"/><path d="M10 1v18M1 10h18M5 3q-3 7 0 14M15 3q3 7 0 14M3 6h14M3 14h14" fill="none" stroke="#777"/></svg><span style="width:66px;padding-left:2px">EPSG:4326</span>
<svg width="17" height="15" viewBox="0 0 17 15"><path d="M8.500 0C18 0 18 12 9 12q3 3 5 3-6 0-8-3C-3 11-1 0 8.500 0z" fill="#555"/><path d="M3 6h2M7 6h2M11 6h2" stroke="#fff" stroke-width="2"/></svg>
<svg width="22" height="19" viewBox="0 0 22 19" style="margin-left:12px"><path d="M1 4h5q-1-3 2-3t2 3h4v4q3-1 3 2t-3 2v5H1v-4q4 0 4-2t-4-2z" fill="#999" stroke="#444"/><path d="M16 3q4-4 5 1t-5 6" fill="none" stroke="#666" stroke-width="2"/></svg>
</div>
</div>

<section class="dlg">
<div class="dt d-flex align-items-center"><svg width="22" height="24"><use href="#q"/></svg><span class="flex-fill text-center" style="padding-right:8px">Select by Expression - buildings</span><svg width="10" height="11" viewBox="0 0 10 11" style="margin-right:5px"><path d="M1 1l8 9M9 1l-8 9" stroke="#333" stroke-width="2.600"/></svg></div>
<div class="dc">
<div class="tabs d-flex align-items-end"><div class="tb" style="width:87px;height:28px;background:#fff;border-bottom-color:#fff;line-height:26px;margin-bottom:-1px">Expression</div><div class="tb" style="width:109px;height:25px;line-height:24px;background:#e4e4e4;border-bottom:0;border-left:0">Function Editor</div></div>
<div class="d-flex" style="height:534px">
<div style="width:269px;margin:19px 9px 0 9px"><div class="ops d-flex justify-content-between"><button class="btn qb">=</button><button class="btn qb">+</button><button class="btn qb">-</button><button class="btn qb">/</button><button class="btn qb">*</button><button class="btn qb">^</button><button class="btn qb">||</button><button class="btn qb">(</button><button class="btn qb">)</button><button class="btn qb">'\n'</button></div>
<div class="well code" style="height:446px;margin-top:6px"><span style="color:#e5ac0e">"cnstrct_yr"</span> <span style="color:#4271ae">&gt;</span> <span style="color:#c82829">2000</span></div>
<div style="margin-top:6px">Output preview:&nbsp; 0</div></div>
<span class="split" style="margin:257px 10px 0 1px;width:2px"></span>
<div style="width:285px;margin:9px 0 0 0"><div class="d-flex justify-content-between"><div class="inp" style="width:199px;height:25px;padding-left:8px"><svg width="14" height="14" style="margin-right:6px"><use href="#loupe"/></svg>Search...</div><button class="btn qb off" style="width:80px">Show Values</button></div>
<div class="well d-flex" style="height:478px;margin-top:6px"><div class="flex-fill overflow-hidden">
<div class="cat"><span>Aggregates</span></div><div class="cat"><span>Arrays</span></div><div class="cat"><span>Color</span></div><div class="cat"><span>Conditionals</span></div><div class="cat"><span>Conversions</span></div><div class="cat"><span>Custom</span></div><div class="cat"><span>Date and Time</span></div><div class="cat open"><span>Fields and Values</span></div>
<div class="fld" style="height:17px">NULL</div><div class="fld"><i>1.2</i>doitt_id</div><div class="fld"><i>abc</i>built_code</div><div class="fld"><i><svg width="14" height="15" viewBox="0 0 14 15"><path d="M.5 2.500h13v12H.5z" fill="#fff" stroke="#555"/><path d="M0 2h14M3 0v3M11 0v3" stroke="#555" stroke-width="2"/><path d="M3 7h9M3 9.500h9M3 12h6" stroke="#555" stroke-width="1.500" stroke-dasharray="2 .7"/></svg></i>date_lstmo</div><div class="fld"><i>abc</i>time_lstmo</div><div class="fld"><i>abc</i>name</div><div class="fld"><i>1.2</i>bin</div><div class="fld"><i>1.2</i>groundelev</div><div class="fld"><i>1.2</i>num_floors</div><div class="fld"><i>1.2</i>shape_area</div><div class="fld"><i>abc</i>bbl</div><div class="fld"><i>abc</i>lststatype</div><div class="fld"><i>1.2</i>feat_code</div><div class="fld"><i>1.2</i>sub_code</div><div class="fld"><i>1.2</i>heightroof</div><div class="fld"><i>1.2</i>shape_len</div><div class="fld sel"><i>1.2</i>cnstrct_yr</div><div class="cat" style="height:19px"><span>Files and Paths</span></div>
</div><div class="sb"><i class="up"></i><b style="height:298px"></b><i class="dn"></i></div></div></div>
<span class="split" style="margin:257px 10px 0 1px;width:2px"></span>
<div style="width:289px;margin-top:18px"><div class="well help" style="height:227px"><div class="strip" style="height:17px;font-size:13.300px;line-height:18px">group field</div><p class="mb-0" style="margin-top:13px;white-space:nowrap">Double-click to add field name to expression string.<br>Right-Click on field name to open context menu<br>sample value loading options.</p><div class="strip" style="height:15px;margin-top:12px;font-size:12px;line-height:15px">Notes</div><p class="mb-0" style="margin-top:13px;white-space:nowrap">Loading field values from WFS layers isn't supported,<br>before the layer is actually inserted, ie. when building<br>queries.</p></div>
<div class="d-flex align-items-center" style="margin-top:10px"><span style="width:43px">Values</span><div class="inp" style="width:246px;height:25px;padding-left:8px"><svg width="14" height="14" style="margin-right:6px"><use href="#loupe"/></svg>Search...</div></div>
<div class="d-flex justify-content-end" style="gap:6px;margin-top:6px"><button class="btn qb" style="width:120px;height:25px">All Unique</button><button class="btn qb" style="width:120px;height:25px">10 Samples</button></div>
<div class="well" style="height:193px;margin-top:6px"></div></div>
</div>
<div class="d-flex align-items-center" style="height:25px"><button class="btn qb" style="width:80px;height:25px"><svg width="17" height="17" viewBox="0 0 17 17"><circle cx="8.500" cy="8.500" r="8" fill="#3f8fdc" stroke="#2367a8"/><text x="5.500" y="13" font-size="12" font-weight="700" fill="#fff">?</text></svg>Help</button>
<button class="btn qb ms-auto" style="width:114px;height:25px">Zoom to Features</button><button class="btn qb" style="width:120px;height:25px;margin-left:6px;padding-right:10px"><svg width="15" height="15" style="margin-right:3px"><use href="#eps"/></svg>Select Features</button><button class="btn qb ar" style="width:12px;height:25px"></button><button class="btn qb" style="width:80px;height:25px;margin-left:12px"><span><u>C</u>lose</span></button></div>
</div></section>

<script src="https://cdn.jsdelivr.net/npm/bootstrap@5.3.0/dist/js/bootstrap.bundle.min.js"></script>
<script>
// City blocks: top-left, top-right, bottom-right, bottom-left corners at the street centre lines
const blocks=[
[1130,216,1197,243,1167,289,1093,264],[1300,217,1431,272,1393,324,1265,266],[1320,293,1393,324,1360,374,1287,339],[1170,165,1300,217,1265,266,1130,213],
[1330,160,1480,220,1433,276,1300,217],[1093,264,1223,318,1190,366,1057,312],[1223,318,1360,374,1323,423,1190,366],[1360,374,1410,398,1378,443,1323,423],
[1410,398,1480,426,1450,474,1378,443],[1393,324,1480,360,1450,412,1360,374],[1423,290,1500,320,1480,360,1393,324],[1057,312,1190,366,1153,416,1020,361],
[1190,366,1323,423,1287,472,1153,416],[1323,423,1460,478,1424,528,1287,472],[1020,361,1153,416,1120,466,987,411],[1153,416,1287,472,1253,521,1120,466],
[1287,472,1434,534,1400,584,1253,521],[987,411,1120,466,1083,514,950,461],[1120,466,1253,521,1217,570,1083,514],[1253,521,1370,572,1337,618,1217,570],
[930,450,1083,514,1043,568,900,508],[1083,514,1217,570,1177,623,1043,568],[1217,570,1337,618,1303,673,1177,623],[1177,623,1367,703,1323,761,1137,679],
[1137,679,1323,761,1280,818,1093,739],[920,668,1093,739,1055,792,870,716],[1093,739,1280,818,1243,872,1055,792],[885,720,1055,792,1017,847,884,790],
[1055,792,1243,872,1203,927,1017,847],[884,790,1017,847,979,897,868,850],[1017,847,1203,927,1167,977,979,897],[868,850,979,897,944,948,856,913],
[979,897,1100,948,1100,956,944,965],[944,970,1133,1024,1110,1070,909,994],[1000,968,1167,977,1133,1021,1030,978],[1367,703,1500,760,1460,815,1323,761],
[1323,761,1460,815,1424,877,1280,818],[1280,818,1440,885,1400,938,1243,872],[1243,872,1340,914,1300,966,1203,927],[1360,920,1440,957,1403,1010,1330,976],
[1203,927,1403,1010,1360,1060,1167,977],[1167,977,1360,1060,1320,1110,1133,1021],[920,190,1083,261,1047,309,880,240],[960,140,1123,211,1083,261,920,189],
[920,255,1047,309,1010,357,885,306],[910,315,1010,357,977,407,870,360],[805,690,897,700,868,850,779,811],[600,680,799,740,779,811,583,728],
[420,670,590,715,540,775,403,721],[583,728,779,811,740,858,540,775],[330,795,468,855,434,898,320,845],[501,825,558,851,495,927,434,898],
[558,851,628,878,560,958,495,927],[434,898,495,927,454,975,393,945],[495,927,560,958,519,1006,454,975],[393,945,454,975,415,1026,345,995],
[454,975,519,1006,490,1060,415,1030],[340,1000,420,1035,400,1060,330,1040],[340,710,400,735,360,775,320,770],[730,1000,837,1000,824,1060,700,1060]
];
let seed=11;
const rnd=()=>(seed=seed*16807%2147483647)/2147483647;
const at=(q,u,v)=>[0,1].map(k=>((1-v)*((1-u)*q[k]+u*q[2+k])+v*((1-u)*q[6+k]+u*q[4+k])).toFixed(1)).join(' ');
let d='';
for(const q of blocks){
  const L=Math.hypot(q[2]-q[0],q[3]-q[1]),H=Math.hypot(q[6]-q[0],q[7]-q[1]);
  const du=12/L,dv=12/H;
  for(const side of [0,1]){
    let u=du,depth=.4;
    while(u<1-du-.01){
      const w=Math.min((4+rnd()*rnd()*20)/L,1-du-u);
      if(rnd()<.45)depth=.3+rnd()*.2;
      const deep=(1-2*dv)*(u<.2||u>.75?.5:depth);
      const a=side?1-dv:dv,b=side?a-deep:a+deep;
      d+=`M${at(q,u,a)}L${at(q,u+w,a)} ${at(q,u+w,b)} ${at(q,u,b)}z`;
      u+=w+(rnd()<.03?3/L:0);
    }
  }
}
document.getElementById('lots').setAttribute('d',d);
document.getElementById('dots').innerHTML=[[678,892],[689,897],[670,903],[680,907],[714,908],[708,917],[626,975],[644,984],[781,959],[829,950],[946,588],[1156,682],[1147,694],[1188,695],[1179,709]].map(p=>`<circle cx="${p[0]}" cy="${p[1]}" r="4"/>`).join('');
</script>
</body>
</html>
